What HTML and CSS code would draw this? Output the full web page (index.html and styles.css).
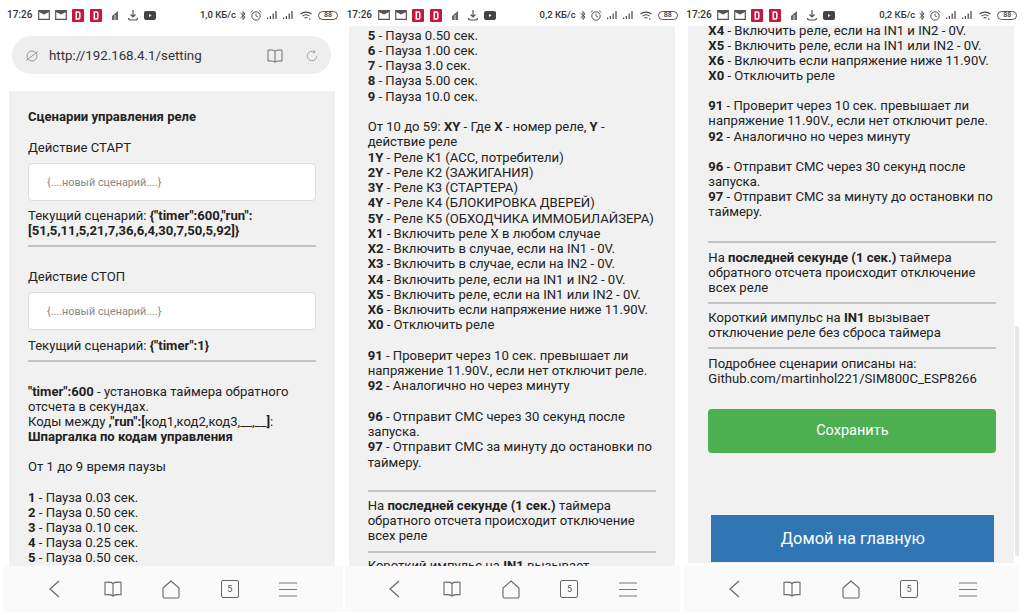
FILE: index.html
```html
<!DOCTYPE html>
<html lang="ru">
<head>
  <meta charset="UTF-8" />
  <meta name="viewport" content="width=device-width, initial-scale=1.0" />
  <title>Сценарии управления реле</title>
  <link rel="stylesheet" href="styles.css">
</head>
<body>
  <!-- общие иконки -->
  <svg class="defs" width="0" height="0">
    <symbol id="i-mail" viewBox="0 0 12 10"><path d="M.7.7h10.600v8.600H.7z" fill="none" stroke="#555" stroke-width="1.200"/><path d="M1 1h10v1L6 4.500 1 2z" fill="#555"/></symbol>
    <symbol id="i-d" viewBox="0 0 12 13"><rect width="12" height="13" rx="1" fill="#c8173f"/><path d="M4.300 3h2.200c1 0 1.300.6 1.300 1.500v4c0 .9-.3 1.500-1.300 1.500H4.300z" fill="none" stroke="#fff" stroke-width="1.500"/></symbol>
    <symbol id="i-leaf" viewBox="0 0 9 11"><path d="M1 10V6l6-5v9z" fill="#666"/><path d="M4 10V5" stroke="#fff" stroke-width=".8"/></symbol>
    <symbol id="i-down" viewBox="0 0 10 11"><path d="M5 0v6.500M2.500 4.500 5 7l2.500-2.500M.5 8c0 1.500 1 2 2 2h5c1 0 2-.5 2-2" fill="none" stroke="#555" stroke-width="1.200"/></symbol>
    <symbol id="i-yt" viewBox="0 0 12 9"><rect width="12" height="9" rx="2" fill="#444"/><path d="M5 3v3l2.500-1.500z" fill="#fff"/></symbol>
    <symbol id="i-bt" viewBox="0 0 6 11"><path d="M.5 3 5 7 3 9.500v-8L5 4 .5 8" fill="none" stroke="#444" stroke-width=".9"/></symbol>
    <symbol id="i-alarm" viewBox="0 0 12 11"><circle cx="6" cy="6" r="4.200" fill="none" stroke="#555"/><path d="M6 3.500V6l2 1M.7 2.500 2.800.7M11.300 2.500 9.200.7" fill="none" stroke="#555" stroke-width=".9"/></symbol>
    <symbol id="i-signal" viewBox="0 0 12 8"><path d="M1 6.500h1.200V8H1zM3.800 5h1.200v3H3.800zM6.600 2.500h1.200V8H6.600zM9.400 0h1.200v8H9.400z" fill="#444"/></symbol>
    <symbol id="i-wifi" viewBox="0 0 12 9"><path d="M.5 3.200c3-2.800 8-2.800 11 0M2.500 5.200c2-1.700 5-1.700 7 0M4.500 7c.9-.6 2.100-.6 3 0" fill="none" stroke="#444" stroke-width="1.100"/><circle cx="9.800" cy="8" r=".8" fill="#444"/></symbol>
    <symbol id="i-back" viewBox="0 0 12 18"><path d="M11 1 2 9l9 8" fill="none" stroke="#666" stroke-width="1.200"/></symbol>
    <symbol id="i-book" viewBox="0 0 18 16"><path d="M9 2.500C7.500 1.200 4 1 1 1.300v12.500c3-.3 6.500 0 8 1.200 1.500-1.200 5-1.500 8-1.200V1.300C14 1 10.500 1.200 9 2.500zM9 2.500V15" fill="none" stroke="#666" stroke-width="1.100"/></symbol>
    <symbol id="i-home" viewBox="0 0 18 19"><path d="M9 1 1 8v8.500c0 1 .5 1.500 1.500 1.500h13c1 0 1.500-.5 1.500-1.500V8z" fill="none" stroke="#666" stroke-width="1.100"/></symbol>
    <symbol id="i-menu" viewBox="0 0 18 15"><path d="M0 1h18M0 7.500h18M0 14h18" stroke="#777" stroke-width="1.200"/></symbol>
  </svg>

  <div class="screens">

    <!-- экран 1 -->
    <section class="phone phone-first">
      <div class="status">
        <span class="time">17:26</span>
        <svg class="ic-mail"><use href="#i-mail"/></svg>
        <svg class="ic-mail"><use href="#i-mail"/></svg>
        <svg class="ic-d"><use href="#i-d"/></svg>
        <svg class="ic-d"><use href="#i-d"/></svg>
        <svg class="ic-leaf"><use href="#i-leaf"/></svg>
        <svg class="ic-down"><use href="#i-down"/></svg>
        <svg class="ic-yt"><use href="#i-yt"/></svg>
        <span class="speed">1,0 КБ/с</span>
        <svg class="ic-bt"><use href="#i-bt"/></svg>
        <svg class="ic-alarm"><use href="#i-alarm"/></svg>
        <svg class="ic-signal"><use href="#i-signal"/></svg>
        <svg class="ic-signal"><use href="#i-signal"/></svg>
        <svg class="ic-wifi"><use href="#i-wifi"/></svg>
        <span class="battery">88</span>
      </div>
      <div class="address">
        <svg class="addr-globe" viewBox="0 0 14 14"><circle cx="7" cy="7" r="5" fill="none" stroke="#999"/><path d="M1 11.500 13 2.500" stroke="#999"/></svg>
        <span class="url">http://192.168.4.1/setting</span>
        <svg class="addr-book"><use href="#i-book"/></svg>
        <svg class="addr-reload" viewBox="0 0 14 14"><path d="M12.500 7A5.500 5.500 0 1 1 10 2.400M9.500 .5 10.500 2.800 8 3.500" fill="none" stroke="#999"/></svg>
      </div>
      <div class="page">
        <div class="card">
          <p class="title">Сценарии управления реле</p>
          <p class="label">Действие СТАРТ</p>
          <input class="field" type="text" placeholder="{....новый сценарий....}" />
          <p class="current">Текущий сценарий: <b>{"timer":600,"run":[51,5,11,5,21,7,36,6,4,30,7,50,5,92]}</b></p>
          <hr />
          <p class="label">Действие СТОП</p>
          <input class="field" type="text" placeholder="{....новый сценарий....}" />
          <p class="current current-stop">Текущий сценарий: <b>{"timer":1}</b></p>
          <hr class="hr-last" />
          <p><b>"timer":600</b> - установка таймера обратного отсчета в секундах.<br />Коды между <b>,"run":[</b>код1,код2,код3,__,__<b>]</b>:<br /><b>Шпаргалка по кодам управления</b></p>
          <p class="pause-head">От 1 до 9 время паузы</p>
          <p><b>1</b> - Пауза 0.03 сек.<br /><b>2</b> - Пауза 0.50 сек.<br /><b>3</b> - Пауза 0.10 сек.<br /><b>4</b> - Пауза 0.25 сек.<br /><b>5</b> - Пауза 0.50 сек.</p>
        </div>
      </div>
      <nav class="nav">
        <svg class="nav-back"><use href="#i-back"/></svg>
        <svg class="nav-book"><use href="#i-book"/></svg>
        <svg class="nav-home"><use href="#i-home"/></svg>
        <span class="nav-tabs">5</span>
        <svg class="nav-menu"><use href="#i-menu"/></svg>
      </nav>
    </section>

    <!-- экран 2 -->
    <section class="phone">
      <div class="status">
        <span class="time">17:26</span>
        <svg class="ic-mail"><use href="#i-mail"/></svg>
        <svg class="ic-mail"><use href="#i-mail"/></svg>
        <svg class="ic-d"><use href="#i-d"/></svg>
        <svg class="ic-d"><use href="#i-d"/></svg>
        <svg class="ic-leaf"><use href="#i-leaf"/></svg>
        <svg class="ic-down"><use href="#i-down"/></svg>
        <svg class="ic-yt"><use href="#i-yt"/></svg>
        <span class="speed">0,2 КБ/с</span>
        <svg class="ic-bt"><use href="#i-bt"/></svg>
        <svg class="ic-alarm"><use href="#i-alarm"/></svg>
        <svg class="ic-signal"><use href="#i-signal"/></svg>
        <svg class="ic-signal"><use href="#i-signal"/></svg>
        <svg class="ic-wifi"><use href="#i-wifi"/></svg>
        <span class="battery">88</span>
      </div>
      <div class="page">
        <div class="card card-second">
          <p><b>5</b> - Пауза 0.50 сек.<br /><b>6</b> - Пауза 1.00 сек.<br /><b>7</b> - Пауза 3.0 сек.<br /><b>8</b> - Пауза 5.00 сек.<br /><b>9</b> - Пауза 10.0 сек.</p>
          <p>От 10 до 59: <b>XY</b> - Где <b>X</b> - номер реле, <b>Y</b> - действие реле<br />
            <b>1Y</b> - Реле К1 (АСС, потребители)<br />
            <b>2Y</b> - Реле К2 (ЗАЖИГАНИЯ)<br />
            <b>3Y</b> - Реле К3 (СТАРТЕРА)<br />
            <b>4Y</b> - Реле К4 (БЛОКИРОВКА ДВЕРЕЙ)<br />
            <b>5Y</b> - Реле К5 (ОБХОДЧИКА ИММОБИЛАЙЗЕРА)<br />
            <b>X1</b> - Включить реле Х в любом случае<br />
            <b>X2</b> - Включить в случае, если на IN1 - 0V.<br />
            <b>X3</b> - Включить в случае, если на IN2 - 0V.<br />
            <b>X4</b> - Включить реле, если на IN1 и IN2 - 0V.<br />
            <b>X5</b> - Включить реле, если на IN1 или IN2 - 0V.<br />
            <b>X6</b> - Включить если напряжение ниже 11.90V.<br />
            <b>X0</b> - Отключить реле</p>
          <p><b>91</b> - Проверит через 10 сек. превышает ли напряжение 11.90V., если нет отключит реле.<br /><b>92</b> - Аналогично но через минуту</p>
          <p><b>96</b> - Отправит СМС через 30 секунд после запуска.<br /><b>97</b> - Отправит СМС за минуту до остановки по таймеру.</p>
          <hr class="hr-gap" />
          <p class="note">На <b>последней секунде (1 сек.)</b> таймера обратного отсчета происходит отключение всех реле</p>
          <hr />
          <p class="note">Короткий импульс на <b>IN1</b> вызывает отключение реле без сброса таймера</p>
        </div>
      </div>
      <nav class="nav">
        <svg class="nav-back"><use href="#i-back"/></svg>
        <svg class="nav-book"><use href="#i-book"/></svg>
        <svg class="nav-home"><use href="#i-home"/></svg>
        <span class="nav-tabs">5</span>
        <svg class="nav-menu"><use href="#i-menu"/></svg>
      </nav>
    </section>

    <!-- экран 3 -->
    <section class="phone">
      <div class="status">
        <span class="time">17:26</span>
        <svg class="ic-mail"><use href="#i-mail"/></svg>
        <svg class="ic-mail"><use href="#i-mail"/></svg>
        <svg class="ic-d"><use href="#i-d"/></svg>
        <svg class="ic-d"><use href="#i-d"/></svg>
        <svg class="ic-leaf"><use href="#i-leaf"/></svg>
        <svg class="ic-down"><use href="#i-down"/></svg>
        <svg class="ic-yt"><use href="#i-yt"/></svg>
        <span class="speed">0,2 КБ/с</span>
        <svg class="ic-bt"><use href="#i-bt"/></svg>
        <svg class="ic-alarm"><use href="#i-alarm"/></svg>
        <svg class="ic-signal"><use href="#i-signal"/></svg>
        <svg class="ic-signal"><use href="#i-signal"/></svg>
        <svg class="ic-wifi"><use href="#i-wifi"/></svg>
        <span class="battery">88</span>
      </div>
      <div class="page">
        <div class="card card-third">
          <p><b>X4</b> - Включить реле, если на IN1 и IN2 - 0V.<br />
            <b>X5</b> - Включить реле, если на IN1 или IN2 - 0V.<br />
            <b>X6</b> - Включить если напряжение ниже 11.90V.<br />
            <b>X0</b> - Отключить реле</p>
          <p><b>91</b> - Проверит через 10 сек. превышает ли напряжение 11.90V., если нет отключит реле.<br /><b>92</b> - Аналогично но через минуту</p>
          <p><b>96</b> - Отправит СМС через 30 секунд после запуска.<br /><b>97</b> - Отправит СМС за минуту до остановки по таймеру.</p>
          <hr class="hr-gap" />
          <p class="note">На <b>последней секунде (1 сек.)</b> таймера обратного отсчета происходит отключение всех реле</p>
          <hr />
          <p class="note">Короткий импульс на <b>IN1</b> вызывает отключение реле без сброса таймера</p>
          <hr />
          <p class="note">Подробнее сценарии описаны на:<br />Github.com/martinhol221/SIM800C_ESP8266</p>
          <button class="btn-save">Сохранить</button>
          <a class="btn-home">Домой на главную</a>
        </div>
        <div class="scrollbar"></div>
      </div>
      <nav class="nav">
        <svg class="nav-back"><use href="#i-back"/></svg>
        <svg class="nav-book"><use href="#i-book"/></svg>
        <svg class="nav-home"><use href="#i-home"/></svg>
        <span class="nav-tabs">5</span>
        <svg class="nav-menu"><use href="#i-menu"/></svg>
      </nav>
    </section>

  </div>
</body>
</html>
```

FILE: styles.css
```css
* { box-sizing: border-box; }
html, body { height: 100%; }
body {
  margin: 0;
  background-color: #ffffff;
  color: #222222;
  font-family: Roboto, 'Liberation Sans', sans-serif;
  font-size: 13.100px;
  line-height: 15.150px;
  overflow: hidden;
}
.defs { position: absolute; }
.screens {
  display: flex;
  height: 615px;
}
.phone {
  width: 340px;
  height: 615px;
  display: flex;
  flex-direction: column;
}
.phone-first { width: 345px; }

/* статус-бар */
.status {
  width: 331px;
  height: 26px;
  margin-left: 2px;
  padding-top: 4px;
  flex: none;
  display: flex;
  align-items: center;
  font-size: 10px;
  font-weight: 500;
  color: #333333;
}
.phone-first .status { margin-left: 7px; }
.status svg { flex: none; }
.time { width: 31px; }
.ic-mail { width: 12px; height: 10px; margin-right: 5px; }
.ic-d { width: 12px; height: 13px; margin-right: 6px; }
.ic-d + .ic-leaf { margin-left: 3px; }
.ic-leaf { width: 9px; height: 11px; margin-right: 8px; }
.ic-down { width: 10px; height: 11px; margin-right: 6px; }
.ic-yt { width: 12px; height: 9px; }
.speed { margin-left: auto; margin-right: 4px; font-size: 9.500px; }
.ic-bt { width: 6px; height: 11px; margin-right: 4px; }
.ic-alarm { width: 12px; height: 11px; margin-right: 4px; }
.ic-signal { width: 12px; height: 8px; margin-right: 4px; }
.ic-wifi { width: 12px; height: 9px; margin: 0 6px 0 2px; }
.battery {
  width: 20px;
  height: 9px;
  border: 1px solid #555555;
  border-radius: 5px;
  font-size: 7px;
  line-height: 7px;
  text-align: center;
}

/* адресная строка */
.address {
  width: 319px;
  height: 38px;
  margin: 10px 0 17px 12px;
  flex: none;
  padding: 1px 13px 0;
  display: flex;
  align-items: center;
  background-color: #eeeeee;
  border-radius: 19px;
}
.addr-globe { width: 14px; height: 14px; flex: none; }
.url { margin-left: 10px; font-size: 13.300px; color: #333333; }
.addr-book { width: 16px; height: 14px; margin-left: auto; }
.addr-reload { width: 12px; height: 14px; margin-left: 23px; }

/* содержимое */
.page {
  flex: 1;
  min-height: 0;
  overflow: hidden;
  position: relative;
}
.card {
  width: 326px;
  min-height: 100%;
  margin-left: 4px;
  padding: 1.500px 19px 0;
  background-color: #f1f1f1;
}
.card p { margin: 0 0 15.150px; }
.card-second { line-height: 15.270px; }
.card-third { padding: 0 18px 0 20px; }
.card-third > p:first-child { margin-top: -3.500px; }

.phone-first .card {
  margin-left: 9px;
  padding-top: 17.500px;
  line-height: 15px;
}
.card .title { font-weight: 700; margin-bottom: 16px; }
.card .label { margin-bottom: 8.500px; }
.card .current { margin: 7px 0 7px; }
.card .current-stop { margin-top: 7.500px; }
.card .pause-head { margin-bottom: 16px; }
.card .note { margin-bottom: 7.500px; }
.card-third .note { margin-bottom: 6.800px; }
.field {
  display: block;
  width: 100%;
  height: 38px;
  padding: 0 18px;
  background-color: #ffffff;
  border: 1px solid #dddddd;
  border-radius: 4px;
  font-family: inherit;
  font-size: 10.800px;
}
.field::placeholder { color: #888888; }
hr {
  height: 2px;
  margin: 0 0 21.500px;
  border: none;
  background-color: #c2c2c2;
}
hr.hr-last { margin-bottom: 22px; }
hr.hr-gap { margin-top: 20px; margin-bottom: 6px; }
.card .note + hr { margin-bottom: 5px; }
.card-third hr.hr-gap { margin-top: 21px; margin-bottom: 7px; }
.card-third .note + hr { margin-bottom: 6.400px; }
.btn-save {
  display: block;
  width: 100%;
  height: 44px;
  margin-top: 23px;
  border: none;
  border-radius: 4px;
  background-color: #4caf50;
  color: #ffffff;
  font-family: inherit;
  font-size: 14.500px;
}
.btn-home {
  display: block;
  width: 283px;
  height: 47px;
  margin: 62px 0 0 3px;
  background-color: #3076b5;
  color: #ffffff;
  font-size: 16.400px;
  line-height: 47px;
  text-align: center;
}
.scrollbar {
  position: absolute;
  left: 331px;
  top: 300px;
  width: 4px;
  height: 230px;
  background-color: #e8e8e8;
}

/* нижняя панель */
.nav {
  width: 335px;
  height: 46px;
  margin-bottom: 3px;
  padding: 0 20px;
  flex: none;
  display: grid;
  grid-template-columns: repeat(5, 58.500px);
  align-items: center;
  justify-items: center;
  background-color: #fafafa;
}
.phone-first .nav { width: 340px; margin-left: 3px; padding: 0 22px; }
.nav-back { width: 12px; height: 18px; }
.nav-book { width: 18px; height: 16px; }
.nav-home { width: 18px; height: 19px; }
.nav-tabs {
  width: 18px;
  height: 18px;
  border: 1px solid #666666;
  border-radius: 2px;
  color: #555555;
  font-size: 9px;
  line-height: 16px;
  text-align: center;
}
.nav-menu { width: 18px; height: 15px; }
```
